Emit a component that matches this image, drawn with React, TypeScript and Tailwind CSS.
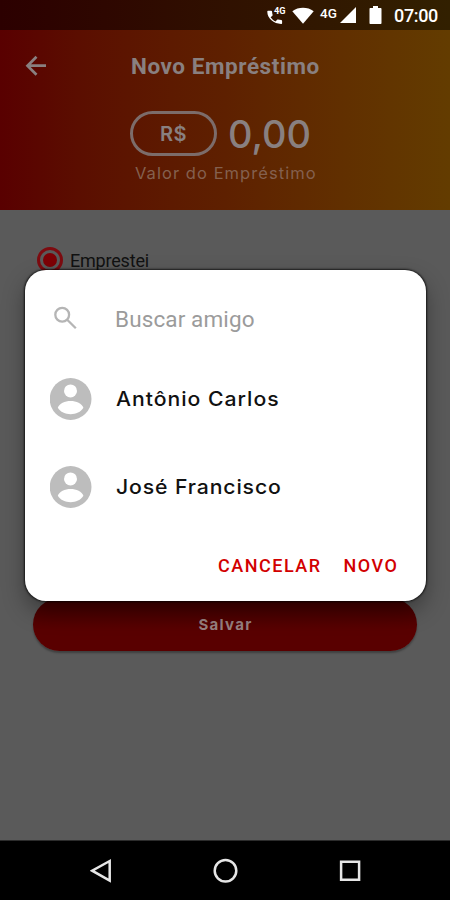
import React from 'react';

const roboto = "font-['Roboto','Liberation_Sans',sans-serif]";
const work = "font-['Inter','Liberation_Sans',sans-serif]";

function StatusBar() {
  return (
    <div className="flex h-[30px] shrink-0 items-center bg-linear-to-r from-[#2c0000] to-[#322000] pl-[266px] text-white">
      <svg className="h-[20px] w-[21px] shrink-0" viewBox="0 0 21 20" fill="currentColor">
        <path d="M1.300 6.800c0-.6.400-1 1-1h2.900c.5 0 .9.4.9.9 0 1 .2 2.100.5 3.100.1.3 0 .7-.2.900l-1.800 1.600c1.300 2 2.900 3.200 4.900 4.200l1.600-1.700c.3-.3.700-.4 1-.2 1 .3 2 .5 3.100.5.5 0 .9.4.9.900v1.900c0 .6-.4 1-1 1C8 18.900 1.300 13.500 1.300 6.800Z" />
        <text x="8" y="8.800" fontSize="8.500" fontWeight="700" textLength="11.500" lengthAdjust="spacingAndGlyphs" className={roboto}>4G</text>
      </svg>
      <svg className="ml-[5px] h-[17px] w-[22px] shrink-0" viewBox="0 0 22 17" fill="currentColor">
        <path d="M.3 4.200C6.500-.4 15.500-.4 21.700 4.200L11 16.700Z" />
      </svg>
      <span className={`${roboto} relative -top-[2px] ml-[6px] w-[19px] text-[13.500px] leading-[16px] font-medium`}>4G</span>
      <svg className="ml-[1px] h-[16px] w-[16px] shrink-0" viewBox="0 0 16 16" fill="currentColor">
        <path d="M0 16 16 0v16Z" />
      </svg>
      <svg className="ml-[13px] h-[20px] w-[13px] shrink-0" viewBox="0 0 13 20" fill="currentColor">
        <path d="M4 1h5v2h2.500c.6 0 1 .4 1 1v14c0 .6-.4 1-1 1h-10c-.6 0-1-.4-1-1v-14c0-.6.4-1 1-1h2.500Z" />
      </svg>
      <span className={`${roboto} relative top-[1px] ml-[12px] text-[18px] leading-[20px] font-medium tracking-[-0.350px]`}>07:00</span>
    </div>
  );
}

function Header() {
  return (
    <header className="h-[180px] shrink-0 bg-linear-to-r from-[#590000] via-[#5e2000] to-[#633c00] text-[#898080]">
      <div className="flex h-[72px] items-center pl-[23px]">
        <svg className="h-[26px] w-[26px] shrink-0" viewBox="0 0 26 26" fill="none" stroke="currentColor" strokeWidth="2.700">
          <path d="M23 12.700H4.500M13.500 3.700l-9 9 9 9" />
        </svg>
        <h1 className={`${roboto} ml-[82px] text-[22.500px] leading-[28px] font-bold tracking-[0.570px] whitespace-nowrap`}>Novo Empréstimo</h1>
      </div>
      <div className={`${work} flex h-[62px] items-center pl-[130px]`}>
        <div className="mt-[1px] flex h-[45px] w-[87px] items-center justify-center rounded-full border-[3px] border-[#7c6c6a] text-[20px] font-semibold tracking-[0.500px]">R$</div>
        <span className="mt-[2px] ml-[11px] text-[38px] leading-[44px] font-medium">0,00</span>
      </div>
      <div className={`${work} h-[24px] pl-[135px] text-[16.500px] leading-[18px] tracking-[1.050px] whitespace-nowrap text-[#84604f]`}>Valor do Empréstimo</div>
    </header>
  );
}

function Avatar() {
  return (
    <svg className="h-[42px] w-[42px] shrink-0" viewBox="0 0 42 42">
      <circle cx="20.600" cy="21" r="20.900" fill="#bdbdbd" />
      <circle cx="20.500" cy="12.900" r="6.500" fill="#fff" />
      <path d="M7.800 29.800C10.600 20.600 30.600 20.600 33.400 29.800C28.400 38.400 12.800 38.400 7.800 29.800Z" fill="#fff" />
    </svg>
  );
}

function Friend({ name, spacing }: { name: string; spacing: string }) {
  return (
    <li className="flex h-[88px] items-center">
      <Avatar />
      <span className={`${work} ml-[24px] origin-left scale-x-[1.060] text-[20px] leading-[28px] font-medium whitespace-nowrap text-[#111] ${spacing}`}>{name}</span>
    </li>
  );
}

function FriendDialog() {
  return (
    <div className="absolute top-[270px] left-[25px] flex h-[331px] w-[401px] flex-col rounded-[21px] bg-white pl-[25px] shadow-[0_0_2px_1px_rgba(0,0,0,0.7),0_10px_22px_rgba(0,0,0,0.35)]">
      <div className="flex h-[85px] shrink-0 items-center pt-[11px]">
        <svg className="ml-[3px] h-[25px] w-[25px] shrink-0" viewBox="0 0 25 25" fill="none" stroke="#b5b5b5" strokeWidth="2.300">
          <circle cx="9.200" cy="8.700" r="6.900" />
          <path d="m14.200 13.700 8.600 8.600" />
        </svg>
        <span className={`${roboto} mt-[1px] ml-[37px] text-[22.500px] leading-[28px] tracking-[0.120px] text-[#9b9b9b]`}>Buscar amigo</span>
      </div>
      <ul>
        <Friend name="Antônio Carlos" spacing="tracking-[0.930px]" />
        <Friend name="José Francisco" spacing="tracking-[0.830px]" />
      </ul>
      <div className={`${roboto} mt-[21px] flex gap-[22px] pl-[168px] text-[18px] leading-[28px] font-medium tracking-[1.500px] text-[#d20000]`}>
        <button>CANCELAR</button>
        <button>NOVO</button>
      </div>
    </div>
  );
}

export default function App() {
  return (
    <div className="relative flex h-[900px] w-[450px] flex-col overflow-hidden bg-[#5a5a5a]">
      <StatusBar />
      <Header />
      <main className="flex flex-1 flex-col">
        <div className="mt-[37px] flex h-[26px] items-center pl-[37px]">
          <span className="flex h-[26px] w-[26px] items-center justify-center rounded-full border-[3px] border-[#7d0b10]">
            <span className="h-[14px] w-[14px] rounded-full bg-[#7d0005]" />
          </span>
          <span className={`${roboto} mt-[1px] ml-[7px] text-[18px] leading-[26px] tracking-[-0.200px] text-[#111]`}>Emprestei</span>
        </div>
        <button className={`${work} mt-[325px] ml-[33px] flex h-[53px] w-[384px] items-center justify-center rounded-full bg-linear-to-b from-[#400000] to-[#590000] to-60% pt-[1px] pl-[1px] text-[15px] font-bold tracking-[1.300px] text-[#978080] shadow-[0_2px_2px_rgba(0,0,0,0.3)]`}>
          Salvar
        </button>
      </main>
      <nav className="flex h-[60px] shrink-0 items-center border-t border-[#2c2c2c] bg-black pl-[90px] text-[#e6e6e6]">
        <svg className="h-[26px] w-[22px] shrink-0" viewBox="0 0 22 26" fill="none" stroke="currentColor" strokeWidth="2.500">
          <path d="M19.700 3v19.500L2.200 12.700Z" />
        </svg>
        <svg className="ml-[101px] h-[26px] w-[26px] shrink-0" viewBox="0 0 26 26" fill="none" stroke="currentColor" strokeWidth="2.500">
          <circle cx="12.500" cy="12.700" r="10.800" />
        </svg>
        <svg className="ml-[100px] h-[22px] w-[22px] shrink-0" viewBox="0 0 22 22" fill="none" stroke="currentColor" strokeWidth="2.500">
          <path d="M2.100 1.700h18v18h-18Z" />
        </svg>
      </nav>
      <FriendDialog />
    </div>
  );
}
